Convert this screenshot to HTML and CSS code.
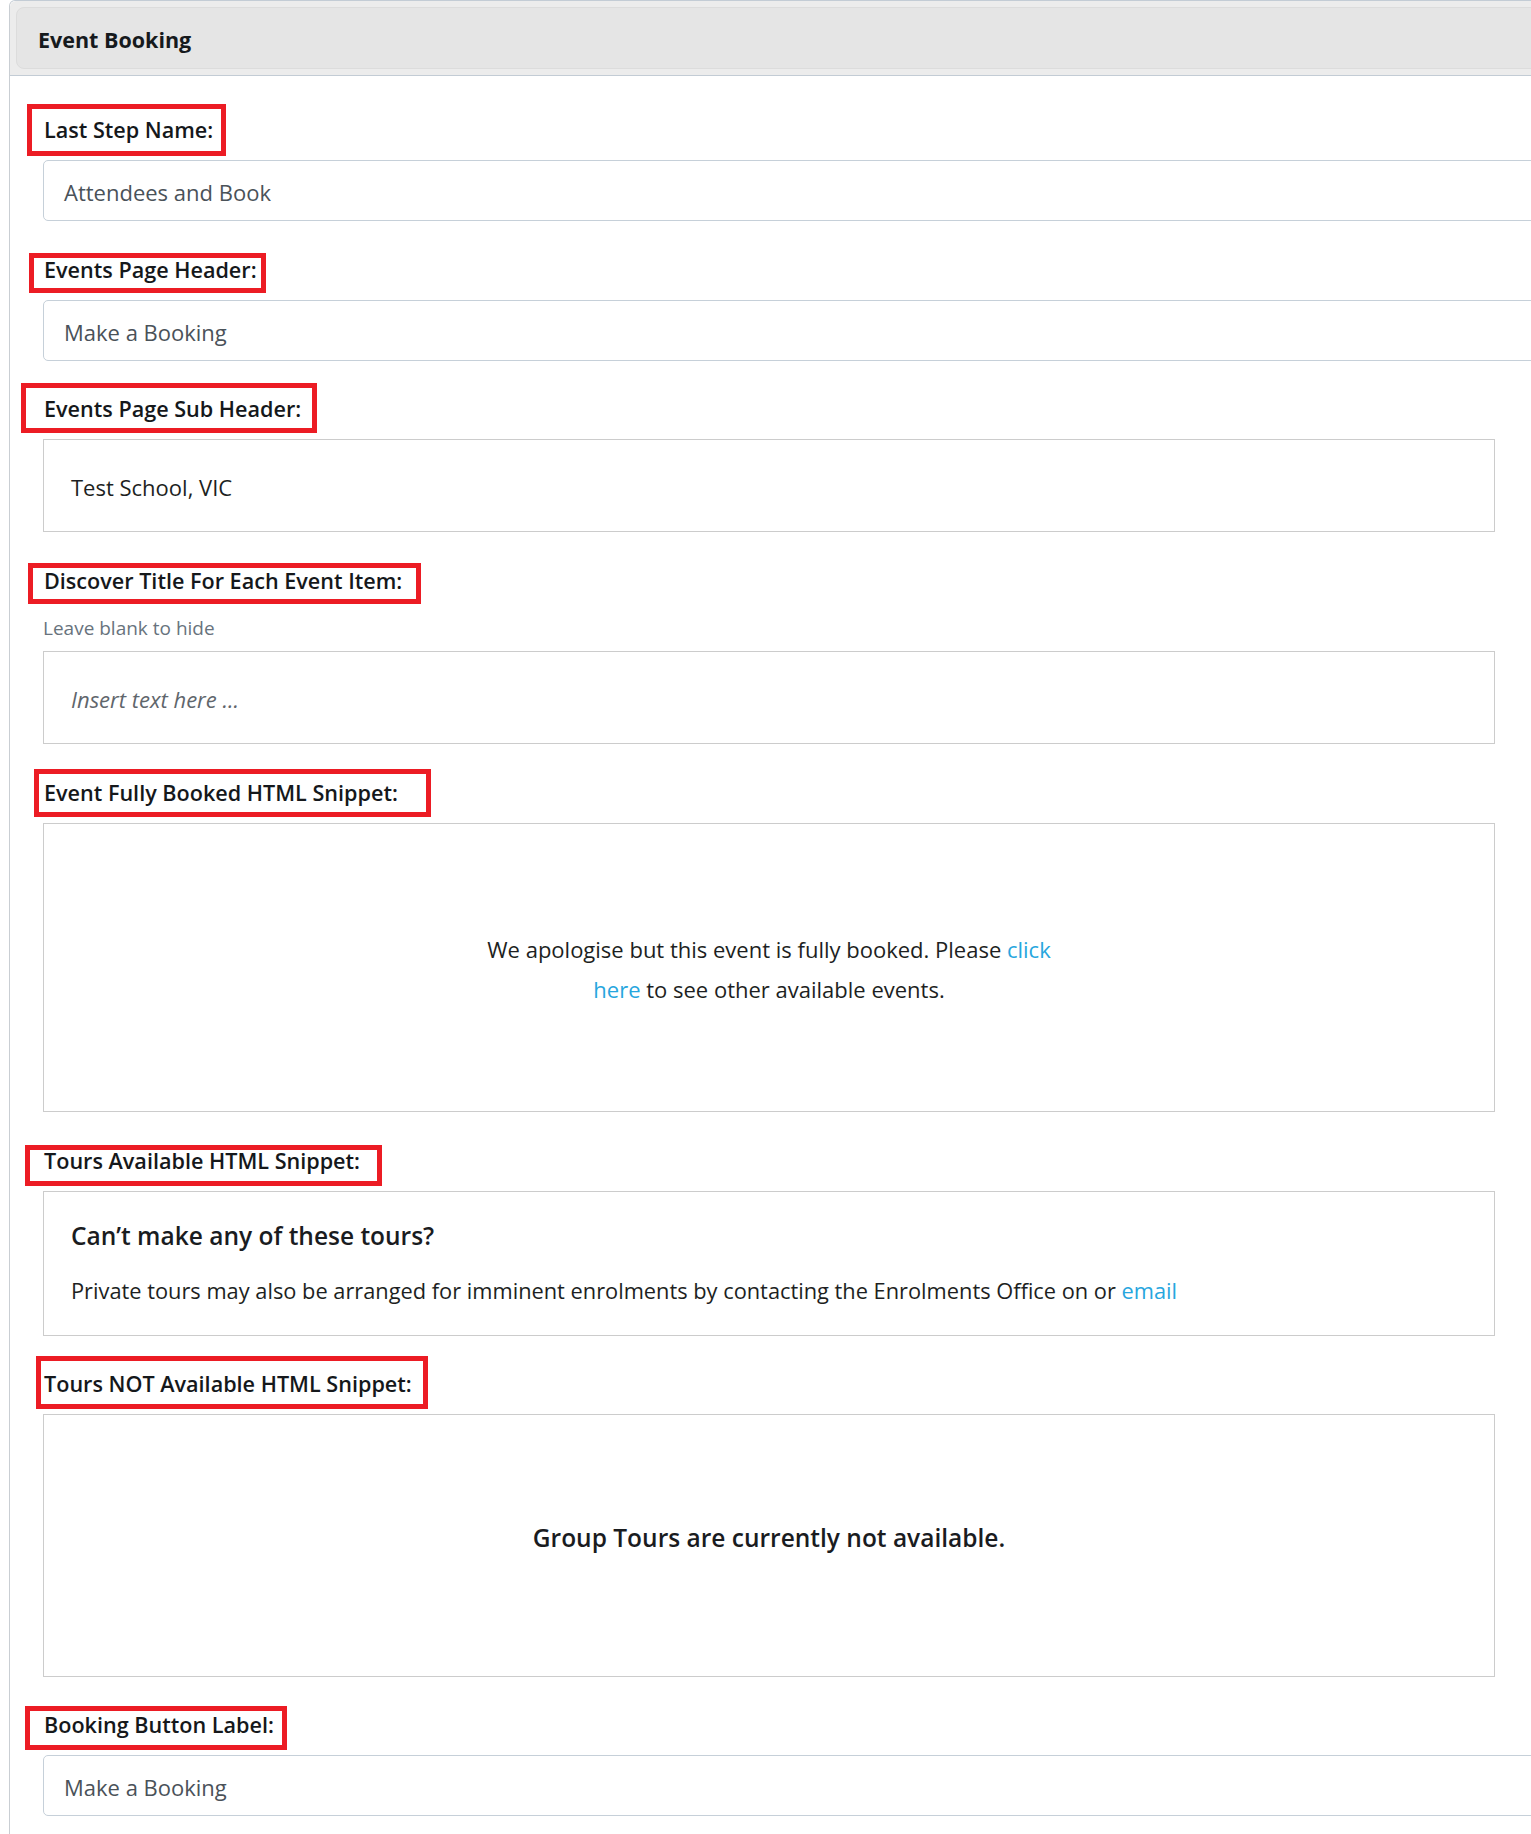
FILE: index.html
```html
<!DOCTYPE html>
<html lang="en">
<head>
<meta charset="utf-8">
<title>Event Booking</title>
<link rel="stylesheet" href="styles.css">
</head>
<body>
<div class="panel">
  <div class="panel-head">
    <div class="panel-head-inner"><span class="panel-title">Event Booking</span></div>
  </div>
  <div class="panel-body">
    <div class="field">
      <label class="lbl"><span class="mark m1"></span>Last Step Name:</label>
      <div class="input">Attendees and Book</div>
    </div>
    <div class="field">
      <label class="lbl"><span class="mark m2"></span>Events Page Header:</label>
      <div class="input">Make a Booking</div>
    </div>
    <div class="field field-tight">
      <label class="lbl"><span class="mark m3"></span>Events Page Sub Header:</label>
      <div class="editor editor-short">Test School, VIC</div>
    </div>
    <div class="field">
      <label class="lbl"><span class="mark m4"></span>Discover Title For Each Event Item:</label>
      <div class="help">Leave blank to hide</div>
      <div class="editor editor-short placeholder">Insert text here ...</div>
    </div>
    <div class="field">
      <label class="lbl"><span class="mark m5"></span>Event Fully Booked HTML Snippet:</label>
      <div class="editor editor-booked">
        <p class="booked-text">We apologise but this event is fully booked. Please <a href="#" class="link">click</a><br><a href="#" class="link">here</a> to see other available events.</p>
      </div>
    </div>
    <div class="field">
      <label class="lbl"><span class="mark m6"></span>Tours Available HTML Snippet:</label>
      <div class="editor editor-tours">
        <h3 class="tours-title">Can’t make any of these tours?</h3>
        <p class="tours-text">Private tours may also be arranged for imminent enrolments by contacting the Enrolments Office on or <a href="#" class="link">email</a></p>
      </div>
    </div>
    <div class="field field-tight">
      <label class="lbl"><span class="mark m7"></span>Tours NOT Available HTML Snippet:</label>
      <div class="editor editor-none">
        <p class="none-text">Group Tours are currently not available.</p>
      </div>
    </div>
    <div class="field field-tight">
      <label class="lbl"><span class="mark m8"></span>Booking Button Label:</label>
      <div class="input">Make a Booking</div>
    </div>
  </div>
</div>
</body>
</html>
```
FILE: styles.css
```css
html, body {
  margin: 0;
  padding: 0;
  overflow: hidden;
  background: #ffffff;
}

body {
  font-family: "Open Sans", "Noto Sans", "Liberation Sans", sans-serif;
  color: #1c1e21;
}

.panel {
  margin-left: 9px;
  width: 1580px;
  border-left: 1px solid #c9ced3;
  border-top: 1px solid #c3ccd5;
  border-top-left-radius: 6px;
  min-height: 1900px;
}

.panel-head {
  background: #ececec;
  padding: 6px 0 6px 6px;
  border-bottom: 1px solid #c3ccd5;
  border-top-left-radius: 6px;
}

.panel-head-inner {
  height: 60px;
  background: #e5e5e5;
  border: 1px solid #dcdcdc;
  border-radius: 8px 0 0 8px;
  display: flex;
  align-items: center;
  padding-left: 21px;
}

.panel-title {
  font-weight: 700;
  font-size: 21.5px;
  color: #161a1d;
  padding-top: 2px;
}

.panel-body {
  padding: 40px 0 0 33px;
}

.field + .field {
  margin-top: 35px;
}

.field + .field-tight {
  margin-top: 34px;
}

.lbl {
  display: block;
  position: relative;
  padding-left: 1px;
  font-size: 21.6px;
  font-weight: 600;
  line-height: 28px;
  height: 28px;
  margin-bottom: 16px;
  color: #15181b;
}

.mark {
  position: absolute;
  box-sizing: border-box;
  border: 5px solid #ec1c24;
  pointer-events: none;
}

.m1 { left: -16px; top: -12px; width: 199px; height: 52px; }
.m2 { left: -14px; top: -3px;  width: 237px; height: 40px; }
.m3 { left: -22px; top: -12px; width: 296px; height: 50px; }
.m4 { left: -15px; top: -4px;  width: 393px; height: 41px; }
.m5 { left: -9px;  top: -10px; width: 397px; height: 48px; }
.m6 { left: -18px; top: -2px;  width: 357px; height: 41px; }
.m7 { left: -7px;  top: -14px; width: 392px; height: 53px; }
.m8 { left: -18px; top: -5px;  width: 262px; height: 44px; }

.input {
  box-sizing: border-box;
  height: 61px;
  border: 1px solid #c6d0d9;
  border-radius: 5px;
  display: flex;
  align-items: center;
  padding: 3px 0 0 20px;
  font-size: 22px;
  color: #4a5259;
}

.help {
  font-size: 19px;
  line-height: 24px;
  padding-top: 5px;
  margin-bottom: 11px;
  color: #68737d;
}

.editor {
  box-sizing: border-box;
  width: 1452px;
  border: 1px solid #cccccc;
  padding: 0 27px;
  font-size: 22px;
  color: #1d1f22;
}

.editor-short {
  height: 93px;
  display: flex;
  align-items: center;
  padding-top: 3px;
}

.placeholder {
  font-style: italic;
  color: #5f666c;
}

.editor-booked {
  height: 289px;
  display: flex;
  align-items: center;
  justify-content: center;
}

.booked-text {
  margin: 0;
  text-align: center;
  line-height: 40px;
  padding-top: 3px;
}

.link {
  color: #27a6de;
  text-decoration: none;
}

.editor-tours {
  height: 145px;
  padding-top: 29px;
}

.tours-title {
  margin: 0;
  font-size: 24.5px;
  font-weight: 600;
  line-height: 30px;
  color: #1a1c1f;
}

.tours-text {
  margin: 25px 0 0;
  font-size: 21.8px;
  line-height: 30px;
}

.editor-none {
  height: 263px;
  display: flex;
  align-items: center;
  justify-content: center;
}

.none-text {
  margin: 0;
  font-size: 24.5px;
  font-weight: 600;
  line-height: 30px;
  padding-bottom: 16px;
  color: #1a1c1f;
}
```
